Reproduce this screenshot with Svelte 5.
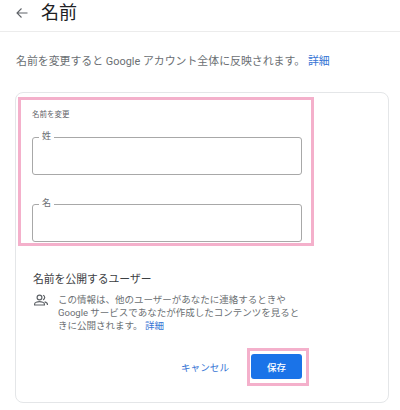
<script>
  let lastName = $state('')
  let firstName = $state('')
</script>

<div class="page">
  <header class="top">
    <svg class="back" viewBox="0 0 16 16" width="16" height="16">
      <path d="M13.5 8H3M7.5 3.5 3 8l4.5 4.5" fill="none" stroke="#5f6368" stroke-width="1.1" />
    </svg>
    <h1>名前</h1>
  </header>

  <p class="intro">名前を変更すると Google アカウント全体に反映されます。 <a href="#top">詳細</a></p>

  <section class="card">
    <div class="mark fields">
      <div class="caption">名前を変更</div>
      <label class="field first">
        <span>姓</span>
        <input bind:value={lastName} />
      </label>
      <label class="field second">
        <span>名</span>
        <input bind:value={firstName} />
      </label>
    </div>

    <h2>名前を公開するユーザー</h2>
    <div class="info">
      <svg viewBox="0 0 16 16" width="16" height="16">
        <g fill="none" stroke="#5f6368" stroke-width="1.2">
          <circle cx="6.5" cy="5.5" r="2.4" />
          <path d="M1.6 13v-1c0-1.5 2.9-2.4 4.9-2.4s4.9.9 4.9 2.4v1z" />
          <path d="M10 3.2a2.4 2.4 0 0 1 0 4.6M11.6 9.8c1.5.4 2.8 1.1 2.8 2.2v1" />
        </g>
      </svg>
      <p>この情報は、他のユーザーがあなたに連絡するときや<br />Google サービスであなたが作成したコンテンツを見ると<br />きに公開されます。 <a href="#top">詳細</a></p>
    </div>

    <div class="actions">
      <button class="cancel">キャンセル</button>
      <div class="mark save-mark">
        <button class="save">保存</button>
      </div>
    </div>
  </section>
</div>

<style>
  :global(body) {
    margin: 0;
    background: #fff;
  }

  .page {
    width: 400px;
    height: 410px;
    overflow: hidden;
    font-family: Roboto, "Noto Sans CJK JP", sans-serif;
    color: #6b6f73;
  }

  .top {
    box-sizing: border-box;
    display: flex;
    align-items: center;
    height: 32px;
    padding: 0 0 6px 14px;
    border-bottom: 1px solid #ececec;
  }

  .back {
    margin-right: 11px;
  }

  h1 {
    margin: 0;
    font-size: 18px;
    line-height: 24px;
    font-weight: 400;
    color: #202124;
  }

  .intro {
    margin: 21px 0 0 16px;
    font-size: 10.9px;
    line-height: 18px;
    white-space: nowrap;
  }

  a {
    color: #3574d4;
    text-decoration: none;
  }

  .card {
    box-sizing: border-box;
    width: 374px;
    height: 311px;
    margin: 21px 0 0 15px;
    padding: 4px 0 0 2px;
    border: 1px solid #e4e6e8;
    border-radius: 8px;
  }

  .mark {
    box-sizing: border-box;
    border: 3px solid #f4b0cb;
  }

  .fields {
    width: 296px;
    height: 149px;
    padding: 9px 8px 0 11px;
  }

  .caption {
    font-size: 7.5px;
    line-height: 12px;
    color: #5f6368;
  }

  .field {
    position: relative;
    display: block;
    width: 270px;
    height: 38px;
  }

  .first {
    margin-top: 16px;
  }

  .second {
    margin-top: 29px;
  }

  .field span {
    position: absolute;
    left: 7px;
    top: -7px;
    padding: 0 3px;
    background: #fff;
    font-size: 9px;
    line-height: 13px;
    color: #6b6f73;
  }

  input {
    box-sizing: border-box;
    display: block;
    width: 100%;
    height: 100%;
    padding: 0 8px;
    border: 1px solid #a8a8a8;
    border-radius: 3px;
    background: none;
    outline: none;
  }

  h2 {
    margin: 25px 0 0 15px;
    font-size: 10.8px;
    line-height: 18px;
    font-weight: 400;
    color: #3c4043;
  }

  .info {
    display: flex;
    margin: 4px 0 0 15px;
  }

  .info svg {
    flex: none;
    margin: -1px 9px 0 0;
  }

  .info p {
    margin: 0;
    font-size: 9.5px;
    line-height: 13px;
    white-space: nowrap;
  }

  .actions {
    display: flex;
    align-items: center;
    margin: 16px 0 0 163px;
  }

  .cancel {
    width: 48px;
    margin-right: 18px;
    padding: 0;
    border: none;
    background: none;
    font: inherit;
    font-size: 9.6px;
    white-space: nowrap;
    color: #3574d4;
  }

  .save-mark {
    width: 62px;
    height: 38px;
    padding: 3px 0 0 1px;
  }

  .save {
    display: block;
    width: 51px;
    height: 25px;
    padding: 0;
    border: none;
    border-radius: 3px;
    background: #1a73e8;
    font: inherit;
    font-size: 9.5px;
    font-weight: 500;
    color: #fff;
  }
</style>
